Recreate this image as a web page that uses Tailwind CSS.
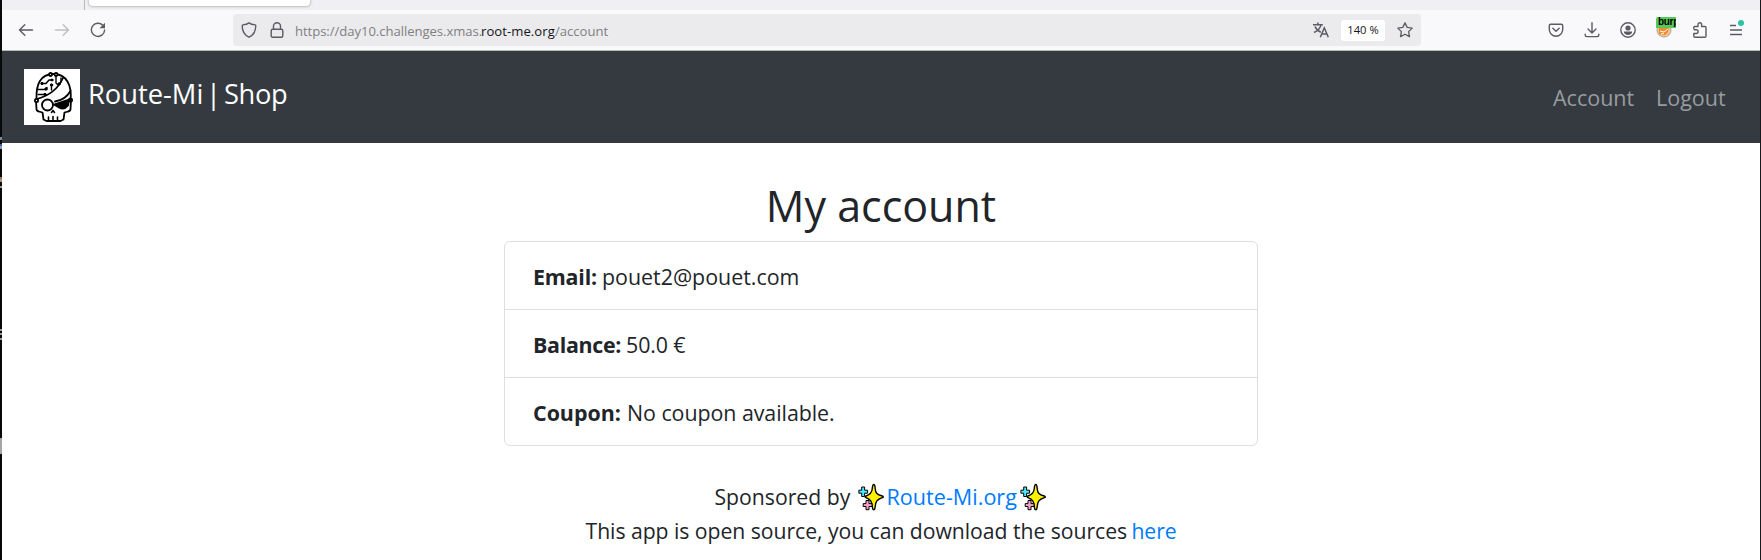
<!DOCTYPE html>
<html lang="en">
<head>
<meta charset="utf-8">
<title>Route-Mi | Shop</title>
<script src="https://cdn.jsdelivr.net/npm/@tailwindcss/browser@4"></script>
</head>
<body class="w-[1761px] h-[560px] overflow-hidden bg-white font-['Open_Sans',sans-serif] text-[#212529]">
<svg class="hidden">
  <symbol id="sparkles" viewBox="0 0 26 28">
    <g stroke="#000" stroke-width="1.400" stroke-linejoin="round">
      <path fill="#fff100" d="M15.800 1.500C16.600 1.500 17 2.500 17.200 5.500C17.500 9.500 18.500 11.500 24.300 13C25.600 13.500 25.600 14.300 24.300 14.700C19 16.500 17.500 18.500 17.200 23.500C17 26 16.600 26.800 15.800 26.800S14.500 26 14.300 23.500C14 18.500 12.500 16.500 8 14.700C7 14.300 7 13.500 8 13C12.500 11.500 14 9.500 14.300 5.500C14.500 2.500 15 1.500 15.800 1.500Z"/>
      <path fill="#50e6ff" stroke-width="1" d="M3.700 4h2.900v3.200h3v3h-3v3.300H3.700v-3.300H.9v-3h2.800z"/>
      <path fill="#f8a0c8" stroke-width="1" d="M8 17.500h3v3.100h3v2.900h-3v3.200H8v-3.200H5.200v-2.900H8z"/>
    </g>
  </symbol>
</svg>
<div class="flex h-full">
  <div class="w-[2px] shrink-0 bg-[#08090a] flex flex-col">
    <div class="mt-[137px] h-[3px] bg-[#7c8c94]"></div>
    <div class="mt-[4px] h-[2px] bg-[#3b62b0]"></div>
    <div class="h-[3px] bg-[#8d9aa0]"></div>
    <div class="mt-[28px] h-[2px] bg-[#777777]"></div>
    <div class="h-[3px] bg-[#b28a5c]"></div>
    <div class="mt-[4px] h-[2px] bg-[#999999]"></div>
    <div class="mt-[141px] h-[2px] bg-[#999999]"></div>
    <div class="mt-[2px] h-[2px] bg-[#999999]"></div>
    <div class="mt-[3px] h-[2px] bg-[#999999]"></div>
    <div class="mt-[98px] h-[16px] bg-[#a5a5a5]"></div>
  </div>
  <div class="w-[1758px] shrink-0 flex flex-col">
    <div class="h-[10px] bg-[#f0eff4] flex">
      <div class="w-[83px] border-r border-[#b8b7be]"></div>
      <div class="ml-[4px] w-[221px] h-[6px] rounded-b-[4px] bg-white shadow-[0_0_3px_rgba(0,0,0,0.45)]"></div>
    </div>
    <div class="h-[41px] bg-[#f9f9fb] border-b border-[#b9bab8] flex items-center text-[#5b5b66]">
      <svg class="ml-[16px] size-4" viewBox="0 0 16 16" fill="none" stroke="currentColor" stroke-width="1.400" stroke-linecap="round" stroke-linejoin="round"><path d="M14.500 8H1.500M6.800 2.700L1.500 8l5.300 5.300"/></svg>
      <svg class="ml-[20px] size-4 text-[#bdbdc3]" viewBox="0 0 16 16" fill="none" stroke="currentColor" stroke-width="1.400" stroke-linecap="round" stroke-linejoin="round"><path d="M1.500 8h13M9.200 2.700L14.500 8l-5.300 5.300"/></svg>
      <svg class="ml-[20px] size-4" viewBox="0 0 16 16" fill="none" stroke="currentColor" stroke-width="1.400" stroke-linecap="round"><path d="M12.800 3.300A6.600 6.600 0 1 0 14.600 8"/><path d="M15 .8v5.500H9.500z" fill="currentColor" stroke="none"/></svg>
      <div class="ml-[127px] w-[1188px] h-8 rounded-[4px] bg-[#ebebed] flex items-center">
        <svg class="ml-[8px] size-4" viewBox="0 0 16 16" fill="none" stroke="currentColor" stroke-width="1.400" stroke-linejoin="round"><path d="M8 .9C6.500 2 4 2.700 1.900 2.900Q1.200 3 1.200 3.800C1.200 9 3 13 8 15.200C13 13 14.800 9 14.800 3.800Q14.800 3 14.100 2.900C12 2.700 9.500 2 8 .9Z"/></svg>
        <svg class="ml-[12px] size-4" viewBox="0 0 16 16" fill="none" stroke="currentColor" stroke-width="1.400"><rect x="2.200" y="7.200" width="11.600" height="8" rx="1.500"/><path d="M4.500 7V4.200a3.500 3.500 0 0 1 7 0V7"/></svg>
        <div class="ml-[10px] pt-[3px] text-[13.100px] whitespace-nowrap text-[#7f7f83] flex"><span class="w-[186px] tracking-[-0.050px]">https://day10.challenges.xmas.</span><span class="w-[74px] tracking-[0.050px] text-[#15141a]">root-me.org</span><span>/account</span></div>
        <svg class="ml-auto mr-[12px] size-4" viewBox="0 0 16 16" fill="none" stroke="currentColor" stroke-width="1.500"><path d="M0 2.800h9.800M4.900.6v2.200M8 2.800C7.300 6 4.500 8.800 1 10.500M2 4.500C3 7 5 9 7.800 10.300M7.300 15.200L11.300 5.800l4 9.400M8.800 12h5"/></svg>
        <div class="w-[44px] h-[21px] mr-[12px] rounded-[3px] bg-white text-[#15141a] text-[11.200px] flex items-center justify-center pt-px">140 %</div>
        <svg class="mr-[8px] size-4" viewBox="0 0 16 16" fill="none" stroke="currentColor" stroke-width="1.300" stroke-linejoin="round"><path d="M8 .9l2.200 4.500 5 .7-3.600 3.500.9 5L8 12.200l-4.500 2.400.9-5L.8 6.100l5-.7z"/></svg>
      </div>
      <svg class="ml-[127px] size-4" viewBox="0 0 16 16" fill="none" stroke="currentColor" stroke-width="1.400" stroke-linecap="round" stroke-linejoin="round"><path d="M2.700 2.200h10.600q1.400 0 1.400 1.400V7.500a6.700 6.700 0 0 1-13.400 0V3.600q0-1.400 1.400-1.400zM4.800 6.200L8 9.300l3.200-3.100"/></svg>
      <svg class="ml-[20px] size-4" viewBox="0 0 16 16" fill="none" stroke="currentColor" stroke-width="1.400" stroke-linecap="round" stroke-linejoin="round"><path d="M8 .8v10M4 7l4 4 4-4M1.200 12.300v.8q0 1.500 1.500 1.500h10.600q1.500 0 1.500-1.500v-.8"/></svg>
      <svg class="ml-[20px] size-4" viewBox="0 0 16 16"><circle cx="8" cy="8" r="7.200" fill="none" stroke="currentColor" stroke-width="1.400"/><circle cx="8" cy="6" r="2.600" fill="currentColor"/><path fill="currentColor" d="M3.800 9.600h8.400c0 2-2 3.400-4.200 3.400S3.800 11.600 3.800 9.600z"/></svg>
      <div class="relative ml-[20px] size-4">
        <svg class="size-4" viewBox="0 0 16 16"><circle cx="8" cy="8" r="7" fill="#f3c492" stroke="#aaa5a0"/><path fill="#f28a26" d="M3 4h10l-1 6-3 3-6-1z"/><path d="M4 9l4 1 4-3M5 12l3-1" stroke="#fff" fill="none"/></svg>
        <div class="absolute left-0 top-[-5px] w-5 h-[11px] rounded-tl-[2px] overflow-hidden bg-[#59c85b] pl-[2px] text-[10px] leading-[10px] font-bold text-black tracking-[-0.300px] font-['Liberation_Sans',sans-serif]">burp</div>
      </div>
      <svg class="ml-[20px] size-4" viewBox="0 0 16 16" fill="none" stroke="currentColor" stroke-width="1.400" stroke-linejoin="round"><path d="M1.800 7.200V5.500q0-1 1-1H6V2.600a1.700 1.700 0 0 1 3.600 0v1.900H13q1 0 1 1V14q0 1.200-1 1.200H3q-1.200 0-1.200-1V11.500h2.400a1.900 1.900 0 0 0 0-3.800H1.800"/></svg>
      <div class="relative ml-[20px] size-4">
        <svg class="size-4" viewBox="0 0 16 16" stroke="currentColor" stroke-width="1.400"><path d="M2 3.500h6M2 8h12M2 12.500h12"/></svg>
        <div class="absolute left-[10px] top-[-2px] size-[6px] rounded-full bg-[#2ac3a2]"></div>
      </div>
    </div>
    <nav class="h-[92px] bg-[#343a40] flex items-center pl-[22px] pr-[32px]">
      <svg class="size-[56px] bg-white" viewBox="0 0 56 56" fill="none" stroke="#000" stroke-width="1.800" stroke-linejoin="round" stroke-linecap="round">
        <path d="M12.500 30C12 16 16 5 29.500 5S48 17 46.500 31M12 32l.5 8q0 2 2.500 2.500l3.500 1 1 7 3 1.500h14l3-1.500 1-7 3.500-1q2.500-.5 2.500-2.500l.5-9"/>
        <path d="M13 30C24 27 34 20 39 9M46.500 22C43 28 38 31.500 31 32.500"/>
        <circle cx="23.500" cy="36" r="5.500"/>
        <path fill="#000" d="M30 35.500l15-5-1 6q-4 5-9 2z"/>
        <circle cx="12.500" cy="31.500" r="1.600" fill="#fff"/><circle cx="46.500" cy="31" r="1.600"/>
        <circle cx="26.500" cy="5.500" r="1.500" fill="#fff"/><circle cx="32" cy="5.500" r="1.500" fill="#fff"/>
        <path stroke-width="1.400" d="M18 14.500h4l3-3.500h3M14 20.500h7l2-2M14 25.500h8M27.500 16v5M32 7v7l2 2M37 9v4"/>
        <g fill="#000" stroke-width="1"><circle cx="18" cy="14.500" r="1.200"/><circle cx="22" cy="20" r="1.200"/><circle cx="21" cy="25.500" r="1.200"/><circle cx="27.500" cy="16" r="1.200"/><circle cx="28" cy="11" r="1"/><circle cx="35" cy="15" r="1.200"/></g>
        <path stroke-width="1.600" d="M29 41.500l-1.500 2M29 41.500l1.500 2M24.500 48v2.500M29 47.500v3M33.500 48v2.500"/>
      </svg>
      <div class="ml-[8px] -mt-[6px] text-[27.300px] leading-[42px] text-white whitespace-nowrap flex"><span class="w-[118px]">Route-Mi</span><span class="w-[18px]">|</span><span class="tracking-[-0.400px]">Shop</span></div>
      <div class="ml-auto pt-[1px] flex text-[21.500px] leading-[34px] text-[#999c9f]">
        <span class="w-[103px]">Account</span><span class="w-[72px]">Logout</span>
      </div>
    </nav>
    <main class="flex flex-col items-center">
      <h1 class="mt-[35px] h-[63px] pt-[1px] text-[43px] leading-[54px]">My account</h1>
      <ul class="w-[754px] h-[205px] border border-[#dfdfdf] rounded-[6px] divide-y divide-[#dfdfdf] text-[21.400px] leading-[34px] whitespace-nowrap">
        <li class="h-[68px] pl-[28px] pt-[18px] flex"><b class="w-[69px] tracking-[-0.200px]">Email:</b><span>pouet2@pouet.com</span></li>
        <li class="h-[68px] pl-[28px] pt-[18px] flex"><b class="w-[93px] tracking-[-0.300px]">Balance:</b><span class="tracking-[-0.100px]">50.0 €</span></li>
        <li class="h-[67px] pl-[28px] pt-[18px] flex"><b class="w-[94px]">Coupon:</b><span class="tracking-[-0.050px]">No coupon available.</span></li>
      </ul>
      <footer class="mt-[34px] w-[591px] text-[21.200px] leading-[34px] whitespace-nowrap">
        <div class="flex items-center pl-[129px]"><span class="w-[143px]">Sponsored by</span><svg class="w-[26px] h-[28px]"><use href="#sparkles"/></svg><a class="ml-[3px] w-[133px] text-[21.600px] text-[#007bff]">Route-Mi.org</a><svg class="w-[26px] h-[28px]"><use href="#sparkles"/></svg></div>
        <div class="flex"><span class="w-[548px] tracking-[-0.040px]">This app is open source, you can download the sources</span><a class="text-[#007bff] tracking-[-0.100px]">here</a></div>
      </footer>
    </main>
  </div>
  <div class="w-px shrink-0 bg-[#16181b]"></div>
</div>
</body>
</html>
